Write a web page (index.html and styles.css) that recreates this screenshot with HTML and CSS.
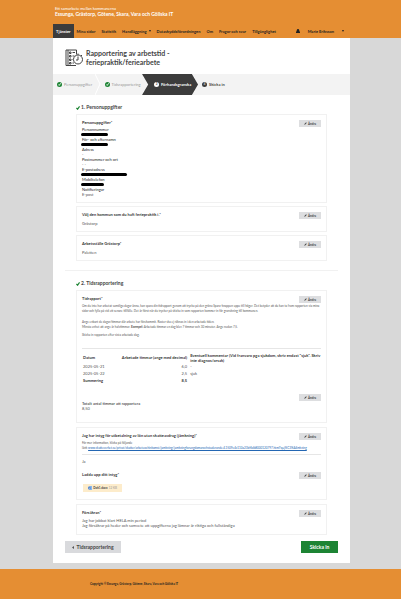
FILE: index.html
```html
<!DOCTYPE html>
<html lang="sv">
<head>
    <meta charset="UTF-8">
    <meta name="viewport" content="width=device-width, initial-scale=1.0">
    <title>Rapportering av arbetstid</title>
    <link rel="stylesheet" href="styles.css">
</head>
<body>
    <svg width="0" height="0" class="sprite" aria-hidden="true">
        <symbol id="pen" viewBox="0 0 10 10"><path d="M1 9l1-3 5-5 2 2-5 5z"/></symbol>
        <symbol id="tick" viewBox="0 0 10 10"><path d="M1 5l3 3 5-7" fill="none" stroke="currentColor" stroke-width="3"/></symbol>
    </svg>
    <header class="site-header">
        <div class="brand">
            <span>Ett samarbete mellan kommunerna</span>
            <strong>Essunga, Grästorp, Götene, Skara, Vara och Göliska IT</strong>
        </div>
        <nav class="nav">
            <a href="#" class="active">Tjänster</a>
            <a href="#">Mina sidor</a>
            <a href="#">Statistik</a>
            <a href="#">Handläggning <i class="caret"></i></a>
            <a href="#">Dataskyddsförordningen</a>
            <a href="#">Om</a>
            <a href="#">Frågor och svar</a>
            <a href="#">Tillgänglighet</a>
            <button type="button" class="user">
                <svg viewBox="0 0 10 10"><circle cx="5" cy="3" r="3"/><path d="M0 10V8q0-3 3-3h4q3 0 3 3v2z"/></svg>
                <span>Marie Eriksson</span>
                <i class="caret"></i>
            </button>
        </nav>
    </header>

    <main class="page">
        <div class="title">
            <svg viewBox="0 0 36 36">
                <path d="M23 11V2H2v31h20M6 2v31"/>
                <path d="M9 6h3v3H9zM9 13h3v3H9zM9 20h3v3H9zM9 27h3v3H9zM15 7h5M15 14h4M15 21h1M15 28h3"/>
                <circle cx="26" cy="21" r="9"/>
                <path d="M26 15v7h-4M26 9v3M32 12l2 2"/>
            </svg>
            <h1>Rapportering av arbetstid -<br>feriepraktik/feriearbete</h1>
        </div>

        <ol class="steps">
            <li class="done">
                <span class="dot"><svg><use href="#tick"/></svg></span>Personuppgifter
                <svg class="chevron" viewBox="0 0 6 21"><path d="M0 0l5 10-5 11"/></svg>
            </li>
            <li class="done"><span class="dot"><svg><use href="#tick"/></svg></span>Tidsrapportering</li>
            <li class="current"><span class="dot">3</span>Förhandsgranska</li>
            <li><span class="dot">4</span><b>Skicka in</b></li>
        </ol>

        <section class="section">
            <h2><svg><use href="#tick"/></svg>1. Personuppgifter</h2>
            <div class="card">
                <div class="head">
                    <h3>Personuppgifter*</h3>
                    <button type="button" class="edit"><svg><use href="#pen"/></svg>Ändra</button>
                </div>
                <dl class="details">
                    <dt>Personnummer</dt>
                    <dd><span class="hidden-value"></span></dd>
                    <dt>För- och efternamn</dt>
                    <dd><span class="hidden-value"></span></dd>
                    <dt>Adress</dt>
                    <dd>-</dd>
                    <dt>Postnummer och ort</dt>
                    <dd>- -</dd>
                    <dt>E-postadress</dt>
                    <dd><span class="hidden-value long"></span></dd>
                    <dt>Mobiltelefon</dt>
                    <dd><span class="hidden-value short"></span></dd>
                    <dt>Notifieringar</dt>
                    <dd>E-post</dd>
                </dl>
            </div>
            <div class="card">
                <div class="head">
                    <h3>Välj den kommun som du haft feriepraktik i.*</h3>
                    <button type="button" class="edit"><svg><use href="#pen"/></svg>Ändra</button>
                </div>
                <p class="value">Grästorp</p>
            </div>
            <div class="card">
                <div class="head">
                    <h3>Arbetsställe Grästorp*</h3>
                    <button type="button" class="edit"><svg><use href="#pen"/></svg>Ändra</button>
                </div>
                <p class="value">Paletten</p>
            </div>
        </section>

        <hr class="divider">

        <section class="section wide-gap">
            <h2><svg><use href="#tick"/></svg>2. Tidsrapportering</h2>
            <div class="card report">
                <div class="head">
                    <h3>Tidrapport*</h3>
                    <button type="button" class="edit"><svg><use href="#pen"/></svg>Ändra</button>
                </div>
                <div class="text">
                    <p>Om du inte har arbetat samtliga dagar ännu, kan spara din tidrapport genom att trycka på den gröna Spara-knappen uppe till höger. Det betyder att du kan ta fram rapporten via mina sidor och fylla på vid ett senare tillfälle. Det är först när du trycker på skicka in som rapporten kommer in för granskning till kommunen.</p>
                    <p class="rules">Ange enbart de dagar/timmar där arbete har förekommit. Raster ska ej räknas in i den arbetade tiden.<br>Minsta enhet att ange är halvtimmar. <b>Exempel:</b> Arbetade timmar en dag blev 7 timmar och 30 minuter. Ange nedan 7,5.</p>
                    <p class="send">Skicka in rapporten efter sista arbetade dag.</p>
                </div>
                <table class="hours">
                    <thead>
                        <tr>
                            <th class="date">Datum</th>
                            <th class="amount">Arbetade timmar (ange med decimal)</th>
                            <th>Eventuell kommentar (Vid frånvaro pga sjukdom, skriv endast "sjuk". Skriv inte diagnos/orsak)</th>
                        </tr>
                    </thead>
                    <tbody>
                        <tr><td>2025-05-21</td><td class="amount">6,0</td><td>-</td></tr>
                        <tr><td>2025-05-22</td><td class="amount">2,5</td><td>sjuk</td></tr>
                        <tr class="sum"><td>Summering</td><td class="amount">8,5</td><td></td></tr>
                    </tbody>
                </table>
                <div class="head total-head">
                    <button type="button" class="edit"><svg><use href="#pen"/></svg>Ändra</button>
                </div>
                <dl class="details">
                    <dt>Totalt antal timmar att rapportera</dt>
                    <dd>8,50</dd>
                </dl>
            </div>
            <div class="card certificate">
                <div class="head">
                    <h3>Jag har intyg för utbetalning av lön utan skatteavdrag (jämkning)*</h3>
                    <button type="button" class="edit"><svg><use href="#pen"/></svg>Ändra</button>
                </div>
                <div class="text">
                    <p>För mer information, klicka på följande<br>länk <a href="#">www.skatteverket.se/privat/skatter/arbeteochinkomst/jamkning/jamkningforungdomarochstuderande.4.1509e4c110a23bf6db8000120797.html?q=j%C3%A4mkning</a></p>
                </div>
                <p class="answer">Ja</p>
                <div class="head upload-head">
                    <h3>Ladda upp ditt intyg*</h3>
                    <button type="button" class="edit"><svg><use href="#pen"/></svg>Ändra</button>
                </div>
                <a href="#" class="file">
                    <svg viewBox="0 0 10 10"><path d="M3 0h7v10H3z" fill="#8ab8ee"/><path d="M0 2h6v6H0z" fill="#2463bd"/><path d="M1 3l1 4 1-3 1 3 1-4" fill="none" stroke="#fff" stroke-width=".8"/></svg>
                    <b>Dok1.docx</b> <span>12 KB</span>
                </a>
            </div>
            <div class="card assurance">
                <div class="head">
                    <h3>Försäkran*</h3>
                    <button type="button" class="edit"><svg><use href="#pen"/></svg>Ändra</button>
                </div>
                <p>Jag har jobbat klart HELA min period<br>Jag försäkrar på heder och samvete att uppgifterna jag lämnar är riktiga och fullständiga</p>
            </div>
        </section>

        <div class="actions">
            <button type="button" class="back"><svg viewBox="0 0 6 10"><path d="M6 0v10L0 5z"/></svg>Tidsrapportering</button>
            <button type="submit" class="submit">Skicka in</button>
        </div>
    </main>

    <footer class="footer">Copyright © Essunga, Grästorp, Götene, Skara, Vara och Göliska IT</footer>
</body>
</html>
```

FILE: styles.css
```css
:root {
    --orange: #e58e33;
    --dark: #3c3c3c;
    --green: #1d8434;
    --grey: #d8d8d8;
    --line: #f1f1f1;
}

* {
    box-sizing: border-box;
}

body {
    margin: 0;
    background-color: var(--grey);
    color: #444;
    font-family: Lato, "Open Sans", sans-serif;
    font-size: 4px;
    line-height: 5px;
}

h1, h2, h3, p, dl, dd, ol {
    margin: 0;
    padding: 0;
}

button {
    border: 0;
    padding: 0;
    font: inherit;
    color: inherit;
    background: none;
    cursor: pointer;
}

a {
    color: inherit;
    text-decoration: none;
}

svg {
    flex: none;
    fill: currentColor;
}

.sprite {
    display: none;
}

/* Header */
.site-header {
    height: 38px;
    padding: 6px 51px 0 53px;
    display: flex;
    flex-direction: column;
    justify-content: space-between;
    background-color: var(--orange);
}

.brand {
    padding-left: 2px;
    display: flex;
    flex-direction: column;
    color: #fff;
}

.brand strong {
    font-size: 5px;
    line-height: 6px;
}

.nav {
    height: 14px;
    display: flex;
    align-items: stretch;
    color: #222;
    font-weight: bold;
    white-space: nowrap;
}

.nav a {
    padding: 0 3px;
    display: flex;
    align-items: center;
    gap: 2px;
}

.nav .active {
    background-color: var(--dark);
    color: #fff;
}

.caret {
    border: 1px solid transparent;
    border-top: 2px solid currentColor;
    border-bottom: 0;
}

.user {
    margin-left: auto;
    padding-right: 6px;
    display: flex;
    align-items: center;
    gap: 8px;
}

.user svg {
    width: 4px;
    height: 4px;
}

/* Page */
.page {
    margin: 0 51px 6px 53px;
    padding-bottom: 10px;
    background-color: #fff;
}

.title {
    height: 36px;
    padding: 11px 12px 0;
    display: flex;
    gap: 3px;
}

.title svg {
    width: 18px;
    height: 18px;
    fill: none;
    stroke: #444;
    stroke-width: 2;
}

.title h1 {
    font-size: 7px;
    line-height: 9px;
}

.steps {
    height: 21px;
    display: flex;
    list-style: none;
    background-color: #f3f3f3;
}

.steps li {
    padding-left: 4px;
    display: flex;
    flex: 0 0 16%;
    align-items: center;
    gap: 2px;
    min-width: 0;
    white-space: nowrap;
}

.steps .done {
    color: #999;
}

.steps .chevron {
    width: 6px;
    height: 21px;
    margin-left: auto;
    fill: none;
    stroke: #fff;
}

.steps .current {
    margin-left: -6px;
    padding-left: 12px;
    flex-basis: 56px;
    background-color: var(--dark);
    color: #fff;
    font-weight: bold;
    clip-path: polygon(0 0, 89% 0, 100% 50%, 89% 100%, 0 100%, 11% 50%);
}

.dot {
    width: 5px;
    height: 5px;
    display: flex;
    flex: none;
    align-items: center;
    justify-content: center;
    border-radius: 50%;
    background-color: var(--dark);
    color: #fff;
    font-size: 3px;
}

.dot svg {
    width: 3px;
    height: 3px;
}

.done .dot {
    background-color: var(--green);
}

.current .dot {
    background-color: #fff;
    color: var(--dark);
}

/* Sections */
.section {
    padding: 9px 23px 0;
    display: flex;
    flex-direction: column;
    gap: 3px;
}

.wide-gap {
    gap: 4px;
}

.section h2 {
    display: flex;
    align-items: center;
    gap: 1px;
    font-size: 5px;
    line-height: 7px;
}

.wide-gap h2 {
    margin-bottom: -1px;
}

.section h2 svg {
    width: 4px;
    height: 4px;
    color: var(--green);
}

.card {
    padding: 5px;
    border: 1px solid var(--line);
}

.head {
    height: 7px;
    display: flex;
    justify-content: space-between;
}

.head h3 {
    color: #333;
    font-size: 4px;
    line-height: 5px;
}

.edit {
    width: 22px;
    height: 7px;
    margin-left: auto;
    display: flex;
    align-items: center;
    justify-content: center;
    gap: 1px;
    background-color: #dddee0;
    font-size: 3px;
    font-weight: bold;
    line-height: 4px;
}

.edit svg {
    width: 3px;
    height: 3px;
}

.details dt {
    height: 5px;
    color: #222;
}

.details dd {
    height: 5px;
    display: flex;
    align-items: center;
    color: #555;
}

.hidden-value {
    width: 27px;
    height: 3px;
    margin-left: -1px;
    border-radius: 2px;
    background-color: #000;
}

.hidden-value.long {
    width: 46px;
}

.hidden-value.short {
    width: 23px;
}

.value {
    padding-top: 2px;
    color: #555;
}

.divider {
    height: 1px;
    margin: 9px 12px 0;
    border: 0;
    background-color: var(--line);
}

.text {
    padding: 1px 0 10px;
    border-bottom: 1px solid #e6e6e6;
    color: #555;
    font-size: 3px;
}

.rules {
    padding-top: 6px;
}

.send {
    padding-top: 3px;
}

.report {
    padding-bottom: 11px;
}

.hours {
    width: 100%;
    margin-top: 3px;
    border-collapse: collapse;
    table-layout: fixed;
}

.hours th,
.hours td {
    height: 7px;
    padding: 0 1px;
    text-align: left;
}

.hours th {
    height: 11px;
    color: #333;
}

.hours td {
    color: #555;
}

.hours .date {
    width: 15%;
}

.hours .amount {
    width: 29%;
    padding-right: 0;
    text-align: right;
}

.hours th:last-child,
.hours td:last-child {
    padding: 0 0 0 3px;
}

.hours .sum td {
    color: #333;
    font-weight: bold;
}

.total-head {
    margin-top: 10px;
}

.certificate {
    padding-bottom: 7px;
}

.certificate .text {
    padding-bottom: 3px;
}

.certificate .text a {
    color: #2467b3;
    text-decoration: underline;
}

.answer {
    padding-top: 4px;
    color: #555;
}

.upload-head {
    margin-top: 8px;
}

.file {
    width: 39px;
    height: 8px;
    margin: 5px 0 0 1px;
    display: flex;
    align-items: center;
    justify-content: center;
    gap: 1px;
    background-color: #fdeccb;
    font-size: 3px;
}

.file svg {
    width: 4px;
    height: 4px;
}

.file span {
    color: #999;
}

.assurance {
    padding-bottom: 6px;
}

.assurance p {
    padding-top: 1px;
    color: #555;
}

.actions {
    padding: 6px 12px 0;
    display: flex;
    justify-content: space-between;
    font-size: 5px;
    font-weight: bold;
}

.back,
.submit {
    height: 12px;
    display: flex;
    align-items: center;
    justify-content: center;
    gap: 2px;
}

.back {
    width: 56px;
    background-color: #d9dadd;
}

.back svg {
    width: 2px;
    height: 3px;
}

.submit {
    width: 37px;
    background-color: var(--green);
    color: #fff;
}

.footer {
    height: 30px;
    padding: 13px 90px 0;
    background-color: var(--orange);
    color: #222;
    font-size: 3px;
    font-weight: bold;
}
```
